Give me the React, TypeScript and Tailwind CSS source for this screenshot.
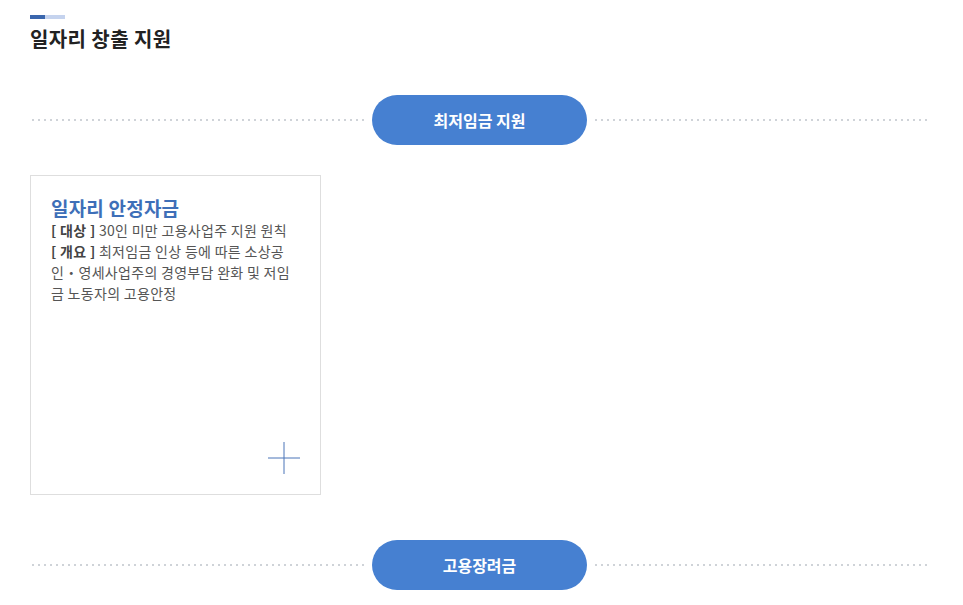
const dots =
  "h-[2px] flex-1 bg-[radial-gradient(circle,#cfd3d8_1px,transparent_1.2px)] bg-[length:6px_2px] bg-repeat-x";

function Divider({ label }: { label: string }) {
  return (
    <div className="flex items-center">
      <div className={dots + " mr-[6px]"}></div>
      <div className="w-[215px] h-[50px] rounded-full bg-[#4680d1] text-white text-[16px] font-bold flex items-center justify-center">
        {label}
      </div>
      <div className={dots + " ml-[6px]"}></div>
    </div>
  );
}

function PlusIcon() {
  return (
    <svg width="34" height="34" viewBox="0 0 34 34" className="text-[#4b74b8]">
      <line x1="17" y1="1" x2="17" y2="33" stroke="currentColor" strokeWidth="1" />
      <line x1="1" y1="17" x2="33" y2="17" stroke="currentColor" strokeWidth="1" />
    </svg>
  );
}

export default function App() {
  return (
    <div
      className="bg-white w-[963px] h-[605px] overflow-hidden text-[#333]"
      style={{ fontFamily: '"Noto Sans CJK KR", "Noto Sans", sans-serif' }}
    >
      <div className="w-[899px] ml-[30px] pt-[15px]">
        <div className="flex h-[4px]">
          <div className="w-[15px] bg-[#3a66ad]"></div>
          <div className="w-[20px] bg-[#c5d3ee]"></div>
        </div>
        <h2 className="mt-[6px] text-[20px] font-bold text-[#222] leading-[28px] tracking-[0.4px]">
          일자리 창출 지원
        </h2>

        <div className="mt-[42px]">
          <Divider label="최저임금 지원" />
        </div>

        <div className="mt-[30px] grid grid-cols-3 gap-[20px]">
          <div className="w-[291px] h-[320px] border border-[#dedede] px-[20px] pt-[20px] pb-[20px] flex flex-col">
            <h3 className="text-[19px] font-bold text-[#3e6fb8] leading-[24px] tracking-[0.2px]">
              일자리 안정자금
            </h3>
            <p className="text-[14px] leading-[21px] text-[#555] tracking-[0.3px]">
              <b className="font-bold text-[#444]">[ 대상 ]</b> 30인 미만 고용사업주 지원 원칙
              <br />
              <b className="font-bold text-[#444]">[ 개요 ]</b> 최저임금 인상 등에 따른 소상공인・영세사업주의 경영부담 완화 및 저임금 노동자의 고용안정
            </p>
            <div className="mt-auto flex justify-end -mr-[1px] -mb-[1px]">
              <PlusIcon />
            </div>
          </div>
        </div>

        <div className="mt-[45px]">
          <Divider label="고용장려금" />
        </div>
      </div>
    </div>
  );
}
